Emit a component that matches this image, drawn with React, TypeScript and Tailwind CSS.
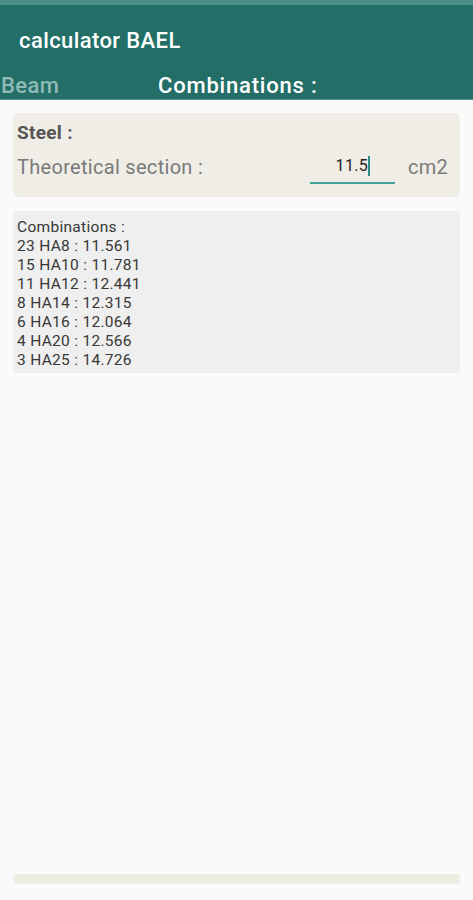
import React from 'react';

const combos = [
  '23 HA8 : 11.561',
  '15 HA10 : 11.781',
  '11 HA12 : 12.441',
  '8 HA14 : 12.315',
  '6 HA16 : 12.064',
  '4 HA20 : 12.566',
  '3 HA25 : 14.726',
];

export default function App() {
  return (
    <div className="w-[473px] h-[900px] bg-[#fafafa] flex flex-col overflow-hidden" style={{ fontFamily: 'Roboto, "Liberation Sans", sans-serif' }}>
      {/* header */}
      <div className="h-[5px] bg-[#4d8e88]" />
      <div className="bg-[#236f67] h-[95px] flex flex-col border-b border-[#4a9890]">
        <div className="h-[66px] shrink-0 flex items-center pl-[19px] pt-[4px]">
          <span className="text-white text-[22px] tracking-[0.4px] font-medium">calculator BAEL</span>
        </div>
        <div className="flex items-start pt-[2px] text-[22px] leading-[26px] tracking-[0.4px] font-medium">
          <span className="pl-[1px] text-[#8fbab5] w-[158px]">Beam</span>
          <span className="text-white tracking-[0.8px]">Combinations :</span>
        </div>
      </div>

      {/* steel card */}
      <div className="mx-[13px] mt-[13px] h-[84px] rounded-md bg-[#f0ede6] px-[4px] pt-[7px]">
        <div className="text-[19px] font-bold text-[#555] leading-[26px] tracking-[0.3px]">Steel :</div>
        <div className="flex items-center mt-[3px]">
          <span className="text-[20px] text-[#7a7a7a] w-[293px] tracking-[0.3px]">Theoretical section :</span>
          <div className="w-[85px] h-[35px] border-b-2 border-[#3fa597] flex items-center justify-end pr-[25px] text-[16px] text-[#222] tracking-[0.3px]">
            11.5<span className="inline-block w-[2px] h-[20px] bg-[#2a8f82]" />
          </div>
          <span className="ml-[13px] text-[20px] text-[#7a7a7a] tracking-[0.3px]">cm2</span>
        </div>
      </div>

      {/* combinations */}
      <div className="mx-[13px] mt-[14px] h-[162px] rounded-sm bg-[#eeefee] px-[4px] pt-[7px] text-[15.5px] leading-[19px] text-[#383838] tracking-[0.3px]">
        <div>Combinations :</div>
        {combos.map((c) => (
          <div key={c}>{c}</div>
        ))}
      </div>

      <div className="flex-1" />
      <div className="mx-[13px] h-[10px] bg-[#edede3] rounded-sm" />
      <div className="h-[16px]" />
    </div>
  );
}
